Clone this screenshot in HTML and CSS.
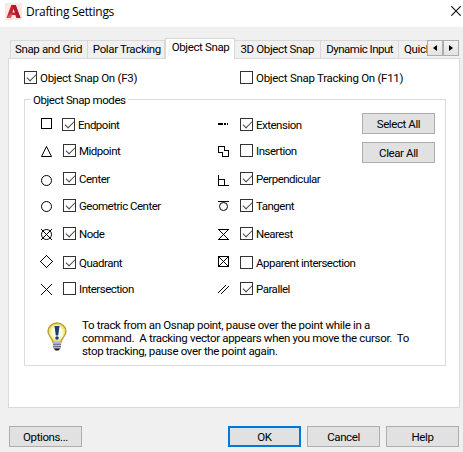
FILE: index.html
```html
<!DOCTYPE html>
<html lang="en">
<head>
<meta charset="utf-8">
<title>Drafting Settings</title>
<link rel="stylesheet" href="styles.css">
</head>
<body>
<div class="dialog">
  <header class="titlebar">
    <svg class="logo" width="17" height="17" viewBox="0 0 17 17"><rect width="17" height="17" fill="#fce9e4"/><path d="M1.5 15L6.3 2h4.4L15.5 15h-4.2l-1-3H6.8l-1 3z" fill="#c9202f"/><path d="M6.3 2h4.4L15.5 15h-3L8.4 4.2z" fill="#a81c2b"/><path d="M7.4 9.6L8.6 6l1.2 3.6z" fill="#fce9e4"/><path d="M1.5 15L6 10l1 2-1.2 3z" fill="#df5960"/></svg>
    <h1>Drafting Settings</h1>
    <svg class="close" width="10" height="10" viewBox="0 0 10 10"><path d="M.3.3l9.4 9.4M9.7.3L.3 9.7" stroke="#111" stroke-width="1.15"/></svg>
  </header>
  <nav class="tabs">
    <span class="tab t1">Snap and Grid</span><span class="tab t2">Polar Tracking</span><span class="tab active">Object Snap</span><span class="tab t4">3D Object Snap</span><span class="tab t5">Dynamic Input</span><span class="tab t6">Quick</span>
    <span class="scroller"><i><svg width="4" height="6" viewBox="0 0 4 6"><path d="M4 0v6L0 3z"/></svg></i><i><svg width="4" height="6" viewBox="0 0 4 6"><path d="M0 0v6l4-3z"/></svg></i></span>
  </nav>
  <main class="pane">
    <div class="switches">
      <label class="opt"><b class="box on"></b><span>Object Snap On (F3)</span></label>
      <label class="opt"><b class="box"></b><span>Object Snap Tracking On (F11)</span></label>
    </div>
    <fieldset class="modes">
      <legend>Object Snap modes</legend>
      <div class="columns">
        <div class="list left">
          <svg class="sym" viewBox="0 0 12 16"><path d="M.5.5h10v10H.5z"/></svg><label class="opt first"><b class="box on"></b><span>Endpoint</span></label>
          <svg class="sym smooth" viewBox="0 0 12 16"><path d="M5.5 2.5L.5 12.5h10z"/></svg><label class="opt"><b class="box on"></b><span>Midpoint</span></label>
          <svg class="sym smooth" viewBox="0 0 12 16"><circle cx="5.5" cy="8.5" r="5"/></svg><label class="opt"><b class="box on"></b><span>Center</span></label>
          <svg class="sym smooth" viewBox="0 0 12 16"><circle cx="5.5" cy="7.5" r="5"/></svg><label class="opt"><b class="box on"></b><span>Geometric Center</span></label>
          <svg class="sym smooth" viewBox="0 0 12 16"><circle cx="5.5" cy="7.5" r="5"/><path d="M0 2l11 11M11 2L0 13"/></svg><label class="opt"><b class="box on"></b><span>Node</span></label>
          <svg class="sym" viewBox="0 0 12 16"><path d="M5.5-.5l6 6-6 6-6-6z"/></svg><label class="opt"><b class="box on"></b><span>Quadrant</span></label>
          <svg class="sym" viewBox="0 0 12 16"><path d="M0 2l11 11M11 2L0 13"/></svg><label class="opt"><b class="box"></b><span>Intersection</span></label>
        </div>
        <div class="list right">
          <svg class="sym" viewBox="0 0 12 16"><path stroke-width="2" d="M0 6h5M6 6h1.5M9 6h1"/></svg><label class="opt"><b class="box on"></b><span>Extension</span></label>
          <svg class="sym" viewBox="0 0 12 16"><path d="M.5 2.5h6v4h4v6h-6v-4h-4z"/></svg><label class="opt"><b class="box"></b><span>Insertion</span></label>
          <svg class="sym" viewBox="0 0 12 16"><path d="M.5 3v10.500h10.500M.5 7.500h6v6"/></svg><label class="opt"><b class="box on"></b><span>Perpendicular</span></label>
          <svg class="sym smooth" viewBox="0 0 12 16"><path d="M0 2.500h11"/><circle cx="5.500" cy="7.500" r="4"/></svg><label class="opt"><b class="box on"></b><span>Tangent</span></label>
          <svg class="sym" viewBox="0 0 12 16"><path d="M0 2.500h11M0 12.500h11M.5 2.500l10 10M10.500 2.500l-10 10"/></svg><label class="opt"><b class="box on"></b><span>Nearest</span></label>
          <svg class="sym" viewBox="0 0 12 16"><path d="M.5.5h10v10H.5zM.5.5l10 10M10.500.5l-10 10"/></svg><label class="opt"><b class="box"></b><span>Apparent intersection</span></label>
          <svg class="sym" viewBox="0 0 12 16"><path d="M0 11l8-8M3 12l8-8"/></svg><label class="opt"><b class="box on"></b><span>Parallel</span></label>
        </div>
        <div class="actions"><button>Select All</button><button>Clear All</button></div>
      </div>
      <div class="tip">
        <svg class="bulb" width="20" height="29" viewBox="0 0 20 29">
          <defs><radialGradient id="glass"><stop offset="0" stop-color="#fff"/><stop offset=".55" stop-color="#fffde0"/><stop offset="1" stop-color="#e7d347"/></radialGradient></defs>
          <path d="M10 1C5 1 1 4.800 1 9.500c0 5 4.500 6 5 11h8c.5-5 5-6 5-11C19 4.800 15 1 10 1z" fill="url(#glass)" stroke="#b5a12a" stroke-width="1.300"/>
          <path d="M7.500 4h5l-1.300 9.500H8.800z" fill="#173f73"/><circle cx="10" cy="16" r="1.800" fill="#173f73"/>
          <path d="M6 20h8v6l-2 2H8l-2-2z" fill="#b9bad0"/><path d="M6 22.300h8M6 24.600h8" stroke="#686b91"/><path d="M7 26.500h6l-1.500 2h-3z" fill="#111"/>
        </svg>
        <p>To track from an Osnap point, pause over the point while in a<br>command.&nbsp; A tracking vector appears when you move the cursor.&nbsp; To<br>stop tracking, pause over the point again.</p>
      </div>
    </fieldset>
  </main>
  <footer><button class="options">Options...</button><button class="ok">OK</button><button>Cancel</button><button>Help</button></footer>
</div>
</body>
</html>
```
FILE: styles.css
```css
* { box-sizing: border-box; }
body { margin: 0; font: 11.5px/13px Roboto, "Liberation Sans", sans-serif; color: #000; letter-spacing: -.36px; }
.dialog { width: 463px; height: 452px; background: #f0f0f0; overflow: hidden; }
.titlebar { height: 27px; background: #fff; display: flex; align-items: flex-start; padding: 3px 2px 0 5px; }
.titlebar h1 { margin: 0 auto 0 4px; font: 12px/17px "Open Sans", sans-serif; letter-spacing: -.3px; }
.close { margin-top: 3px; }
.tabs { height: 31px; padding: 11px 4px 0 10px; display: flex; align-items: flex-end; white-space: nowrap; }
.tab { height: 18px; border: 1px solid #d9d9d9; border-width: 1px 1px 0 0; padding: 2px 0 0 5px; overflow: hidden; }
.t1 { width: 78px; border-left-width: 1px; padding-left: 4px; }
.t2 { width: 77px; }
.active { width: 71px; height: 21px; margin-bottom: -1px; background: #fff; padding-left: 6px; border-left-width: 1px; z-index: 1; }
.t4 { width: 86px; }
.t5 { width: 78px; letter-spacing: -.5px; }
.t6 { width: 28px; border-right: 0; }
.scroller { display: flex; margin: 0 0 2px; }
.scroller i { width: 16px; height: 16px; border: 1px solid #adadad; background: linear-gradient(#f3f3f3, #e3e3e3); display: flex; align-items: center; justify-content: center; }
.pane { width: 452px; height: 350px; margin-left: 8px; background: #fff; border: 1px solid #d9d9d9; padding: 12px 13px 0 15px; }
.switches { display: grid; grid-template-columns: 216px 1fr; height: 22px; letter-spacing: -.28px; }
.opt { display: flex; height: 13px; gap: 3px; white-space: nowrap; }
.opt span { padding-top: 1px; }
.box { width: 13px; height: 13px; border: 1px solid #333; background: #fff; flex: none; }
.on::after { content: ""; display: block; width: 8px; height: 4px; margin: 2px 0 0 2px; border: solid #444; border-width: 0 0 1.400px 1.400px; transform: rotate(-45deg); }
.modes { margin: 0; width: 422px; height: 273px; padding: 0 9px 0 16px; border: 1px solid #dcdcdc; }
legend { margin-left: -10px; padding: 1px 2px 0; height: 13px; letter-spacing: -.42px; }
.columns { display: grid; grid-template-columns: 177px 144px 73px; height: 199px; padding-top: 12px; }
.list { display: grid; grid-template-columns: 22px 1fr; grid-template-rows: 26px 28px 27px 28px 29px 26px 13px; align-items: start; letter-spacing: -.5px; }
.sym { width: 12px; height: 16px; overflow: visible; fill: none; stroke: #000; stroke-width: 1; shape-rendering: crispEdges; }
.smooth { shape-rendering: auto; }
.first { margin-left: -1px; }
.actions { display: flex; flex-direction: column; gap: 8px; margin-top: -5px; }
button { font: inherit; letter-spacing: -.4px; color: inherit; width: 73px; height: 21px; padding: 1px 0 0; border: 1px solid #adadad; background: #e1e1e1; }
.tip { display: flex; padding: 17px 0 0 6px; }
.tip p { margin: -3px 0 0 15px; white-space: nowrap; letter-spacing: -.33px; }
footer { display: flex; padding: 18px 0 0 9px; gap: 6px; }
.options { margin-right: 140px; }
.ok { border: 2px solid #0078d7; }
```
